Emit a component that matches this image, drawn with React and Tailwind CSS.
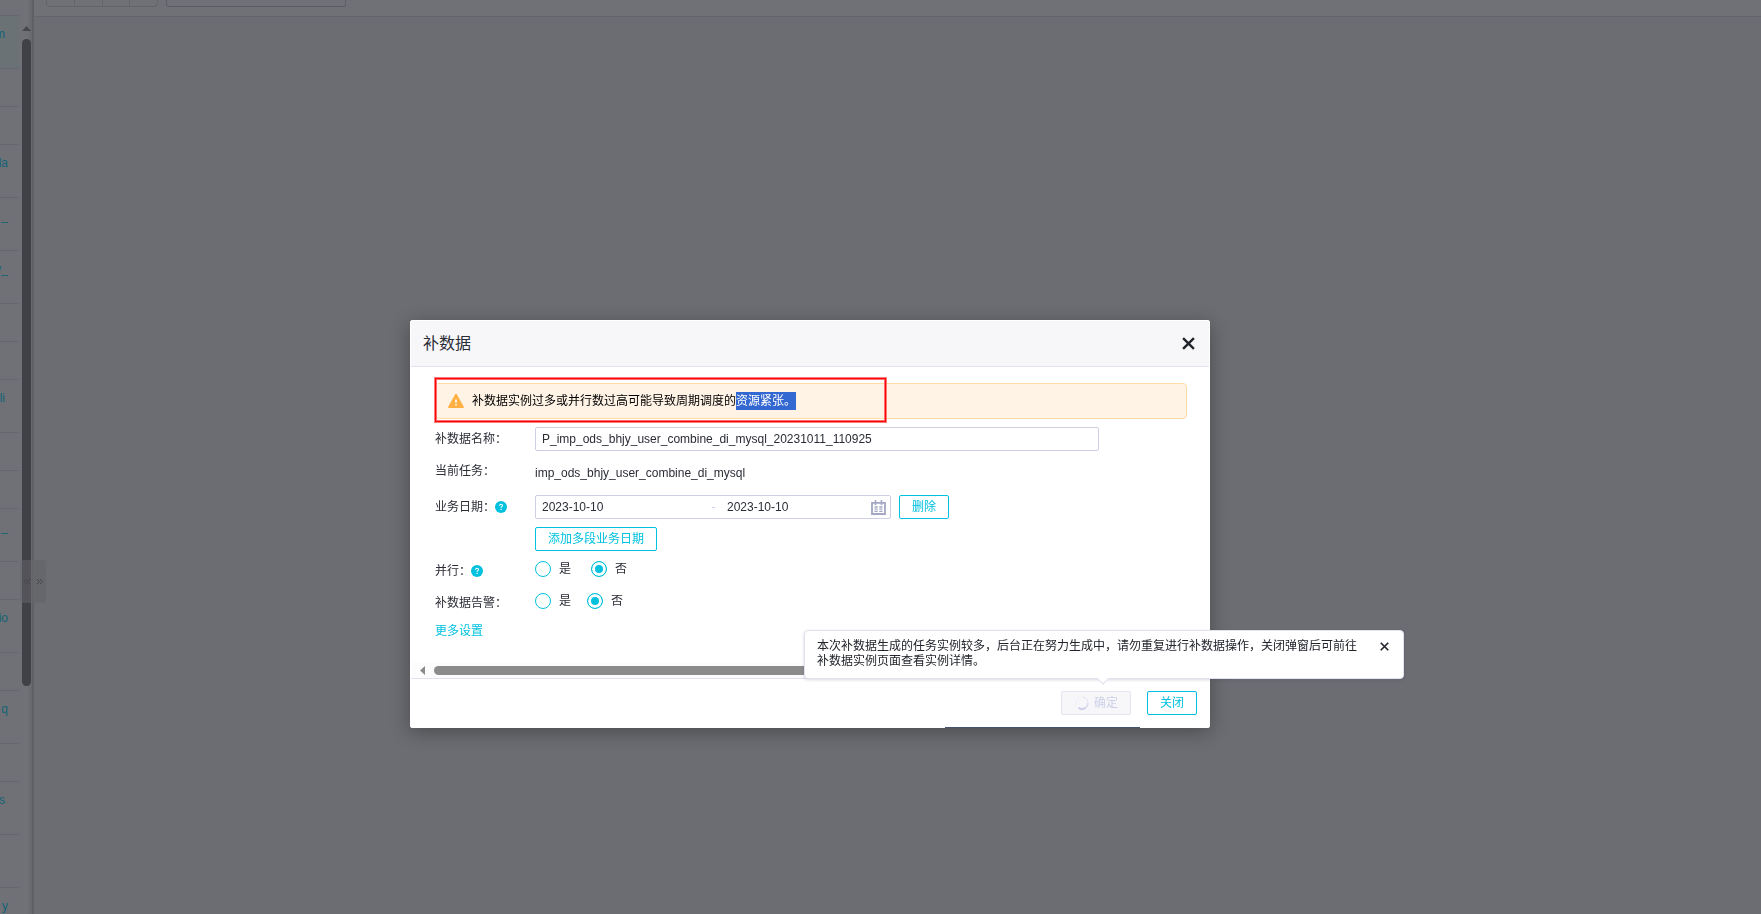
import { useState } from 'react';
import { clsx } from 'clsx';

const TASK_ROWS = [
  { id: 'r1', tall: true, text: 'm', short: true, active: true },
  { id: 'r2', text: '' },
  { id: 'r3', text: '' },
  { id: 'r4', tall: true, text: 'la' },
  { id: 'r5', tall: true, text: '_' },
  { id: 'r6', tall: true, text: 'y_' },
  { id: 'r7', text: '' },
  { id: 'r8', text: '' },
  { id: 'r9', tall: true, text: 'li', short: true },
  { id: 'r10', text: '' },
  { id: 'r11', text: '' },
  { id: 'r12', tall: true, text: '_' },
  { id: 'r13', text: '' },
  { id: 'r14', tall: true, text: 'io' },
  { id: 'r15', text: '' },
  { id: 'r16', tall: true, text: 'q' },
  { id: 'r17', text: '' },
  { id: 'r18', tall: true, text: 's', short: true },
  { id: 'r19', tall: true, text: '' },
  { id: 'r20', tall: true, text: 'y' }
];

const PRIMARY_BUTTON =
  'h-6 cursor-pointer rounded-xs border border-[#00c1de] bg-white px-3 leading-none text-[#00c1de]';

function TaskList() {
  return (
    <aside className="flex h-full w-[34px] shrink-0 overflow-hidden border-r-2 border-[#5f6064] bg-[#707176]">
      <ul className="w-[19px] shrink-0 pt-[15px]">
        {TASK_ROWS.map((row) => (
          <li
            key={row.id}
            className={clsx(
              'border-t border-[#65666f] leading-4',
              row.tall ? 'h-[53px] pt-2.5' : 'h-[38px]',
              row.active && 'bg-[#6b7276]'
            )}
          >
            {row.text && (
              <a href="#task" className={clsx('flex justify-end text-[#136477]', row.short ? 'w-[5px]' : 'w-2')}>
                {row.text}
              </a>
            )}
          </li>
        ))}
      </ul>
      <div className="flex flex-1 flex-col items-start bg-linear-to-r from-[#707176] from-60% to-[#67686c] pt-[26px] pl-[3px]">
        <svg width="9" height="5" viewBox="0 0 9 5" className="shrink-0" aria-hidden="true">
          <path d="M4.5 0 9 5H0z" fill="#47484c" />
        </svg>
        <div className="mt-2 h-[647px] w-[9px] shrink-0 rounded-full bg-[#404146]" />
      </div>
    </aside>
  );
}

function Toolbar() {
  return (
    <div className="flex h-[17px] items-start gap-2 overflow-hidden border-b border-[#63646e] bg-[#707176] pl-3">
      <div className="flex h-[7px] w-28 divide-x divide-[#646569] rounded-b-sm border border-t-0 border-[#646569]">
        {['first', 'prev', 'next', 'last'].map((name) => (
          <button key={name} type="button" aria-label={name} className="flex-1" />
        ))}
      </div>
      <select
        aria-label="pageSize"
        className="h-[7px] w-[180px] appearance-none rounded-b-xs border border-t-0 border-[#5b5c68]"
      />
    </div>
  );
}

function ChevronPair({ d }) {
  return (
    <svg width="8" height="7" viewBox="0 0 8 7" fill="none" stroke="currentColor" aria-hidden="true">
      <path d={d} />
    </svg>
  );
}

function Splitter() {
  return (
    <div className="absolute top-[560px] left-5 flex h-[43px] text-[#45464a]">
      <button
        type="button"
        aria-label="collapse"
        className="flex w-[13px] items-center justify-center rounded-l-sm bg-[#65666b]/50"
      >
        <ChevronPair d="M4 1 1.5 3.5 4 6M7 1 4.5 3.5 7 6" />
      </button>
      <button
        type="button"
        aria-label="expand"
        className="flex w-[13px] items-center justify-center rounded-r-sm bg-[#66676b]"
      >
        <ChevronPair d="M1 1 3.5 3.5 1 6M4 1 6.5 3.5 4 6" />
      </button>
    </div>
  );
}

function CloseIcon({ size }) {
  return (
    <svg width={size} height={size} viewBox="0 0 12 12" stroke="#22242b" strokeWidth="2.2" aria-hidden="true">
      <path d="M1 1l10 10M11 1 1 11" />
    </svg>
  );
}

function HelpIcon() {
  return (
    <svg width="12" height="12" viewBox="0 0 12 12" aria-hidden="true">
      <circle cx="6" cy="6" r="6" fill="#00c1de" />
      <path d="M4.6 4.7c0-1.9 2.9-1.8 2.9-.1 0 1-1.4 1.1-1.4 2.2" fill="none" stroke="#fff" strokeWidth="1.1" />
      <path d="M5.5 7.7h1.2v1.2H5.5z" fill="#fff" />
    </svg>
  );
}

function WarningIcon() {
  return (
    <svg width="16" height="16" viewBox="0 0 16 16" className="shrink-0" aria-hidden="true">
      <path d="M8 1.4 15.2 14.2H.8z" fill="#ffb042" stroke="#ffb042" strokeWidth="1.4" strokeLinejoin="round" />
      <path d="M7.1 6.5h1.8v3.2H7.1zM7.1 11h1.8v1.6H7.1z" fill="#fff3e6" />
    </svg>
  );
}

function CalendarIcon() {
  return (
    <svg width="15" height="15" viewBox="0 0 15 15" fill="none" stroke="#a3a7c2" aria-hidden="true">
      <path d="M1 2.8h13v11.2H1z" strokeWidth="1.8" />
      <path d="M4.5 0v5M10.5 0v5" strokeWidth="1.6" />
      <path d="M3.5 7h3.2M8.3 7h3.2M3.5 9.2h3.2M8.3 9.2h3.2M3.5 11.4h3.2M8.3 11.4h3.2" strokeWidth="1.3" />
    </svg>
  );
}

function Spinner() {
  return (
    <svg width="16" height="16" viewBox="0 0 16 16" fill="none" strokeWidth="1.3" aria-hidden="true">
      <path d="M9 2.1A6 6 0 0 1 14 8" stroke="#e0e1f0" strokeDasharray="1.6 1" />
      <path d="M14 8a6 6 0 0 1-2.6 4.9" stroke="#d6d8ec" />
      <path d="M11.4 12.9A6 6 0 0 1 4.4 12.8" stroke="#cdd0e8" strokeWidth="2" />
      <path d="M2.2 9.4A6 6 0 0 1 7 2.1" stroke="#e6e7f2" strokeDasharray="1.2 1.8" />
    </svg>
  );
}

function FieldLabel({ htmlFor, id, help, children }) {
  return (
    <div className="flex h-6 w-[100px] shrink-0 items-center">
      {htmlFor ? <label htmlFor={htmlFor}>{children}</label> : <span id={id}>{children}</span>}
      {help && <HelpIcon />}
    </div>
  );
}

function YesNo({ name, labelledBy, value, onChange, gap }) {
  return (
    <div role="radiogroup" aria-labelledby={labelledBy} className={clsx('flex h-5 items-center', gap)}>
      {[
        { value: 'yes', label: '是' },
        { value: 'no', label: '否' }
      ].map((option) => (
        <label key={option.value} className="flex items-center gap-2 leading-4">
          <input
            type="radio"
            name={name}
            checked={value === option.value}
            onChange={() => onChange(option.value)}
            className="size-4 appearance-none rounded-full border border-[#00c1de] bg-white checked:bg-[#00c1de] checked:shadow-[inset_0_0_0_3px_#fff]"
          />
          {option.label}
        </label>
      ))}
    </div>
  );
}

function SubmitTip({ onClose }) {
  return (
    <div
      role="tooltip"
      className="absolute bottom-full -left-[257px] mb-3 flex w-[600px] items-start rounded-sm border border-[#e1e2ee] bg-white pt-2 pr-3.5 pb-[9px] pl-3 leading-[15px] text-[#22242b] shadow-[0_1px_3px_rgba(60,70,110,0.2)]"
    >
      <p className="w-[546px]">
        本次补数据生成的任务实例较多，后台正在努力生成中，请勿重复进行补数据操作，关闭弹窗后可前往补数据实例页面查看实例详情。
      </p>
      <button
        type="button"
        aria-label="关闭提示"
        onClick={onClose}
        className="ml-auto flex h-[15px] cursor-pointer items-center"
      >
        <CloseIcon size={9} />
      </button>
      <span className="absolute -bottom-[5px] left-[294px] size-2 rotate-45 border-r border-b border-[#e1e2ee] bg-white" />
    </div>
  );
}

export default function App() {
  const [name, setName] = useState('P_imp_ods_bhjy_user_combine_di_mysql_20231011_110925');
  const [startDate, setStartDate] = useState('2023-10-10');
  const [endDate, setEndDate] = useState('2023-10-10');
  const [parallel, setParallel] = useState('no');
  const [alarm, setAlarm] = useState('no');
  const [tipOpen, setTipOpen] = useState(true);

  return (
    <div className="relative flex h-screen overflow-hidden bg-[#6c6d72] font-['Liberation_Sans','Noto_Sans_CJK_SC',sans-serif] text-xs text-[#2b2d36]">
      <TaskList />
      <main className="min-w-0 flex-1">
        <Toolbar />
      </main>
      <Splitter />

      <div className="fixed inset-0 flex items-start justify-center pt-80 pr-[141px]">
        <section
          role="dialog"
          aria-labelledby="dialog-title"
          className="relative w-[800px] rounded-xs border border-white bg-white shadow-[0_4px_20px_rgba(0,0,0,0.32)]"
        >
          <header className="flex h-[46px] items-center justify-between border-b border-[#e1e2ee] bg-[#f7f7fa] pr-3.5 pl-3">
            <h2 id="dialog-title" className="text-base leading-6">
              补数据
            </h2>
            <button type="button" aria-label="关闭" className="cursor-pointer">
              <CloseIcon size={13} />
            </button>
          </header>

          <form className="pt-4 pr-[22px] pl-6" onSubmit={(event) => event.preventDefault()}>
            <div
              role="alert"
              className="relative flex h-9 items-center gap-2 rounded-sm border border-[#ffdba6] bg-[#fff3e6] pl-3 text-black"
            >
              <WarningIcon />
              <p className="leading-[18px]">
                补数据实例过多或并行数过高可能导致周期调度的
                <mark className="inline-block bg-[#3367d1] text-white">资源紧张。</mark>
              </p>
              <span className="absolute -top-1.5 -left-px h-11 w-[451px] border border-[#fa0505] shadow-[0_0_0_1px_#ff7b7b,inset_0_0_0_1px_#ff6b6b]" />
            </div>

            <div className="mt-2 flex">
              <FieldLabel htmlFor="patch-name">补数据名称：</FieldLabel>
              <input
                id="patch-name"
                type="text"
                value={name}
                onChange={(event) => setName(event.target.value)}
                className="h-6 w-[564px] rounded-xs border border-[#cdcfe4] px-1.5 outline-none"
              />
            </div>

            <div className="mt-2 flex h-7">
              <FieldLabel>当前任务：</FieldLabel>
              <span className="leading-7">imp_ods_bhjy_user_combine_di_mysql</span>
            </div>

            <div className="mt-2 flex">
              <FieldLabel htmlFor="start-date" help>
                业务日期：
              </FieldLabel>
              <div className="flex h-6 w-[356px] items-center rounded-xs border border-[#cdcfe4] pr-1 pl-1.5">
                <input
                  id="start-date"
                  type="text"
                  value={startDate}
                  onChange={(event) => setStartDate(event.target.value)}
                  className="w-[158px] outline-none"
                />
                <span className="w-[27px] text-center text-[#cdcfe4]">-</span>
                <input
                  type="text"
                  aria-label="结束日期"
                  value={endDate}
                  onChange={(event) => setEndDate(event.target.value)}
                  className="min-w-0 flex-1 outline-none"
                />
                <CalendarIcon />
              </div>
              <button type="button" className={clsx(PRIMARY_BUTTON, 'ml-2')}>
                删除
              </button>
            </div>
            <button type="button" className={clsx(PRIMARY_BUTTON, 'mt-2 ml-[100px] block')}>
              添加多段业务日期
            </button>

            <div className="mt-2 flex">
              <FieldLabel id="parallel-label" help>
                并行：
              </FieldLabel>
              <YesNo
                name="parallel"
                labelledBy="parallel-label"
                value={parallel}
                onChange={setParallel}
                gap="gap-5"
              />
            </div>
            <div className="mt-2 flex">
              <FieldLabel id="alarm-label">补数据告警：</FieldLabel>
              <YesNo name="alarm" labelledBy="alarm-label" value={alarm} onChange={setAlarm} gap="gap-4" />
            </div>

            <a href="#more" className="mt-2 block w-fit leading-4 text-[#00c1de]">
              更多设置
            </a>
          </form>

          <div className="mt-6 flex h-[15px] items-center gap-[9px] bg-[#fcfcfc] pr-6 pl-[9px]">
            <svg width="5" height="9" viewBox="0 0 5 9" aria-hidden="true">
              <path d="M0 4.5 5 0v9z" fill="#8a8a8a" />
            </svg>
            <div className="h-[9px] w-[640px] rounded-full bg-[#8b8b8b]" />
          </div>

          <footer className="flex h-[49px] items-center justify-end gap-4 border-t border-[#e1e2ee] pr-3">
            <div className="relative">
              <button
                type="button"
                disabled
                className="flex h-6 items-center gap-1 rounded-xs border border-[#e4e5f1] bg-[#f7f7fa] px-3 leading-none text-[#cdd0e8]"
              >
                <Spinner />
                确定
              </button>
              {tipOpen && <SubmitTip onClose={() => setTipOpen(false)} />}
            </div>
            <button type="button" className={PRIMARY_BUTTON}>
              关闭
            </button>
          </footer>
          <span className="absolute top-full left-[534px] h-px w-[195px] bg-[#46536c]" />
        </section>
      </div>
    </div>
  );
}
